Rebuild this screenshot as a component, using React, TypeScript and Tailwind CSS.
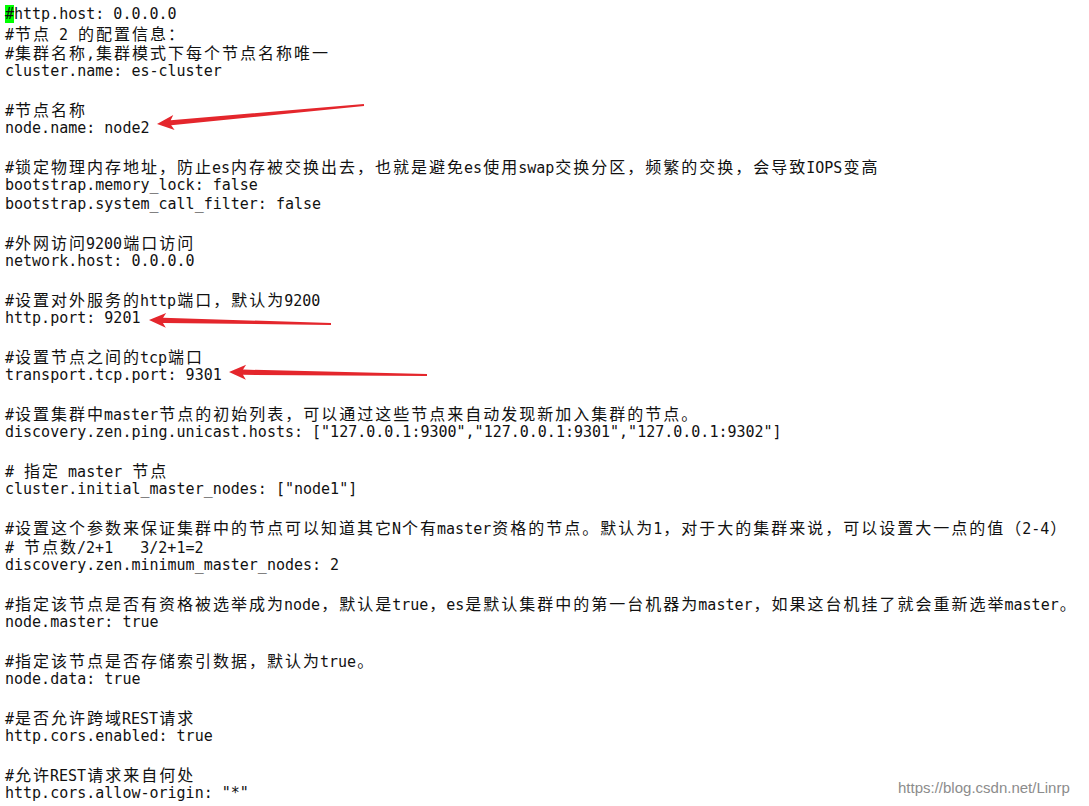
const lines: string[] = [
  "#http.host: 0.0.0.0",
  "#节点 2 的配置信息：",
  "#集群名称,集群模式下每个节点名称唯一",
  "cluster.name: es-cluster",
  "",
  "#节点名称",
  "node.name: node2",
  "",
  "#锁定物理内存地址，防止es内存被交换出去，也就是避免es使用swap交换分区，频繁的交换，会导致IOPS变高",
  "bootstrap.memory_lock: false",
  "bootstrap.system_call_filter: false",
  "",
  "#外网访问9200端口访问",
  "network.host: 0.0.0.0",
  "",
  "#设置对外服务的http端口，默认为9200",
  "http.port: 9201",
  "",
  "#设置节点之间的tcp端口",
  "transport.tcp.port: 9301",
  "",
  "#设置集群中master节点的初始列表，可以通过这些节点来自动发现新加入集群的节点。",
  'discovery.zen.ping.unicast.hosts: ["127.0.0.1:9300","127.0.0.1:9301","127.0.0.1:9302"]',
  "",
  "# 指定 master 节点",
  'cluster.initial_master_nodes: ["node1"]',
  "",
  "#设置这个参数来保证集群中的节点可以知道其它N个有master资格的节点。默认为1，对于大的集群来说，可以设置大一点的值（2-4）",
  "# 节点数/2+1   3/2+1=2",
  "discovery.zen.minimum_master_nodes: 2",
  "",
  "#指定该节点是否有资格被选举成为node，默认是true，es是默认集群中的第一台机器为master，如果这台机挂了就会重新选举master。",
  "node.master: true",
  "",
  "#指定该节点是否存储索引数据，默认为true。",
  "node.data: true",
  "",
  "#是否允许跨域REST请求",
  "http.cors.enabled: true",
  "",
  "#允许REST请求来自何处",
  'http.cors.allow-origin: "*"',
];

// [tailX, tailY, tipX, tipY]
const arrows: number[][] = [
  [364, 105, 157, 124],
  [331, 324, 149, 320],
  [427, 375, 229, 372],
];

function isWide(ch: string) {
  const c = ch.codePointAt(0) ?? 0;
  return (c >= 0x2e80 && c <= 0x9fff) || (c >= 0xff00 && c <= 0xffef);
}

function arrowPoints([tx, ty, hx, hy]: number[]) {
  const len = Math.hypot(tx - hx, ty - hy);
  const dx = (tx - hx) / len;
  const dy = (ty - hy) / len;
  const nx = -dy;
  const ny = dx;
  const p = (along: number, side: number) =>
    `${hx + dx * along + nx * side},${hy + dy * along + ny * side}`;
  return [
    p(0, 0),
    p(17, 7.5),
    p(14, 2.6),
    p(len, 1),
    p(len, -1),
    p(14, -2.6),
    p(17, -7.5),
  ].join(" ");
}

function Line({ text, cursor }: { text: string; cursor?: boolean }) {
  const parts: { wide: boolean; s: string }[] = [];
  for (const ch of Array.from(text)) {
    const wide = isWide(ch);
    const last = parts[parts.length - 1];
    if (!wide && last && !last.wide) last.s += ch;
    else parts.push({ wide, s: ch });
  }
  return (
    <div className="h-[19px] leading-[19px] whitespace-pre">
      {parts.map((p, i) =>
        p.wide ? (
          <span
            key={i}
            className="inline-block w-[18px] text-center text-[16px] font-['Noto_Sans_CJK_SC',sans-serif]"
          >
            {p.s}
          </span>
        ) : cursor && i === 0 ? (
          <span key={i}>
            <span className="bg-[#00ff00]">{p.s[0]}</span>
            {p.s.slice(1)}
          </span>
        ) : (
          <span key={i}>{p.s}</span>
        )
      )}
    </div>
  );
}

export default function App() {
  return (
    <div className="relative w-[1089px] h-[806px] overflow-hidden bg-white pl-[5px] pt-[5px] text-[15px] text-[#111] font-['DejaVu_Sans_Mono','Noto_Sans_CJK_SC',monospace]">
      {lines.map((l, i) => (
        <Line key={i} text={l} cursor={i === 0} />
      ))}

      <svg
        className="absolute left-0 top-0 pointer-events-none"
        width={1089}
        height={806}
      >
        {arrows.map((a, i) => (
          <polygon key={i} points={arrowPoints(a)} fill="#e4262c" />
        ))}
      </svg>

      <div className="absolute left-[898px] top-[778px] text-[15px] leading-[19px] text-[#8c8c8c] font-['Liberation_Sans',Arial,sans-serif]">
        https://blog.csdn.net/Linrp
      </div>
    </div>
  );
}
